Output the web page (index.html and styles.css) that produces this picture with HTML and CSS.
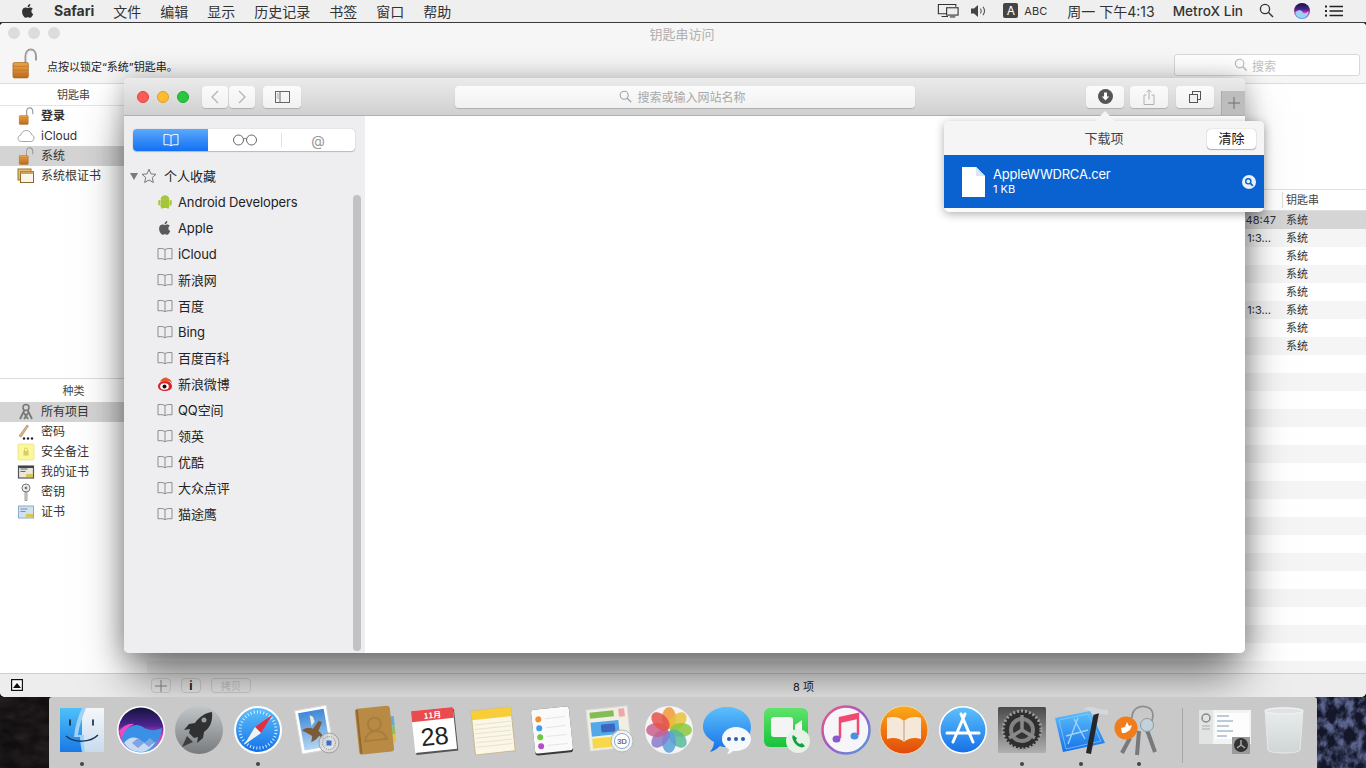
FILE: index.html
```html
<!DOCTYPE html>
<html lang="zh-CN">
<head>
<meta charset="utf-8">
<title>Safari</title>
<link rel="stylesheet" href="styles.css">
</head>
<body>
<svg class="defs" aria-hidden="true">
  <defs>
    <filter id="wallDark" x="0" y="0" width="100%" height="100%" color-interpolation-filters="sRGB"><feTurbulence type="fractalNoise" baseFrequency=".05 .09" numOctaves="3" seed="4"/><feColorMatrix values="0 0 0 0 .17  0 0 0 0 .14  0 0 0 0 .14  1.4 0 0 0 -.35"/></filter>
    <filter id="wallBlue" x="0" y="0" width="100%" height="100%" color-interpolation-filters="sRGB"><feTurbulence type="fractalNoise" baseFrequency=".11 .09" numOctaves="4" seed="9"/><feColorMatrix values="0 0 0 0 .36  0 0 0 0 .4  0 0 0 0 .56  3 0 0 0 -1.15"/></filter>
    <linearGradient id="lockBody" x1="0" y1="0" x2="0" y2="1"><stop offset="0" stop-color="#e9a24c"/><stop offset=".5" stop-color="#d98a2e"/><stop offset="1" stop-color="#b96a1c"/></linearGradient>
    <linearGradient id="blueG" x1="0" y1="0" x2="0" y2="1"><stop offset="0" stop-color="#5cc0fb"/><stop offset="1" stop-color="#1670e8"/></linearGradient>
    <linearGradient id="skyG" x1="0" y1="0" x2="0" y2="1"><stop offset="0" stop-color="#3f88d8"/><stop offset="1" stop-color="#b4d6f2"/></linearGradient>
    <linearGradient id="finderL" x1="0" y1="0" x2="0" y2="1"><stop offset="0" stop-color="#4fc1f9"/><stop offset="1" stop-color="#1a78e6"/></linearGradient>
    <linearGradient id="finderR" x1="0" y1="0" x2="0" y2="1"><stop offset="0" stop-color="#f4f7fa"/><stop offset="1" stop-color="#c9dbee"/></linearGradient>
    <linearGradient id="siriG" x1="0" y1="0" x2="0" y2="1"><stop offset="0" stop-color="#14143a"/><stop offset=".4" stop-color="#4a2490"/><stop offset=".62" stop-color="#d63fb0"/><stop offset="1" stop-color="#4fa8e8"/></linearGradient>
    <linearGradient id="grayG" x1="0" y1="0" x2="0" y2="1"><stop offset="0" stop-color="#c3c6c8"/><stop offset="1" stop-color="#777b7e"/></linearGradient>
    <linearGradient id="gearG" x1="0" y1="0" x2="0" y2="1"><stop offset="0" stop-color="#4a4a4a"/><stop offset="1" stop-color="#b0b0b0"/></linearGradient>
    <linearGradient id="ftG" x1="0" y1="0" x2="0" y2="1"><stop offset="0" stop-color="#5fe36a"/><stop offset="1" stop-color="#18c23c"/></linearGradient>
    <linearGradient id="ringG" x1="0" y1="0" x2="1" y2="1"><stop offset="0" stop-color="#f0567c"/><stop offset=".5" stop-color="#a05ac8"/><stop offset="1" stop-color="#4aa0e8"/></linearGradient>
    <linearGradient id="booksG" x1="0" y1="0" x2="0" y2="1"><stop offset="0" stop-color="#fbab18"/><stop offset="1" stop-color="#e2470b"/></linearGradient>
    <linearGradient id="trashG" x1="0" y1="0" x2="0" y2="1"><stop offset="0" stop-color="#e9eded"/><stop offset="1" stop-color="#d0d6d6"/></linearGradient>
    <symbol id="book" viewBox="0 0 16 14"><path d="M8 2.6C6.6 1.5 4 1.3 1 1.6v10.2c3-.3 5.6-.1 7 1 1.4-1.1 4-1.3 7-1V1.6c-3-.3-5.6-.1-7 1zM8 2.6v10.2" fill="none" stroke="#8d8d8f" stroke-width="1"/></symbol>
    <symbol id="apple" viewBox="0 0 24 24"><path d="M17.05 12.54c-.03-2.6 2.13-3.85 2.22-3.91-1.21-1.77-3.09-2.01-3.76-2.04-1.6-.16-3.12.94-3.93.94-.81 0-2.06-.92-3.39-.89-1.74.03-3.35 1.01-4.25 2.57-1.81 3.14-.46 7.8 1.3 10.35.86 1.25 1.89 2.65 3.24 2.6 1.3-.05 1.79-.84 3.36-.84 1.57 0 2.01.84 3.39.81 1.4-.02 2.28-1.27 3.14-2.53.99-1.45 1.4-2.85 1.42-2.92-.03-.01-2.72-1.04-2.75-4.14zM14.47 4.9c.72-.87 1.2-2.08 1.07-3.28-1.03.04-2.28.69-3.02 1.55-.66.77-1.24 2-1.09 3.18 1.15.09 2.33-.58 3.04-1.45z"/></symbol>
    <symbol id="lock" viewBox="0 0 26 32"><path d="M14 17V8.5C14 4 16.5 1.5 19.5 1.5S25 4 25 8.5V13" fill="none" stroke="#9a9a9c" stroke-width="2"/><path d="M15.5 16V8.5c0-3 1.5-5.5 4-5.5" fill="none" stroke="#e4e4e6" stroke-width="1"/><rect x="1" y="15" width="16" height="16" rx="1.5" fill="url(#lockBody)" stroke="#a8641d" stroke-width=".7"/><path d="M1 19h16M1 23h16M1 27h16" stroke="#b8742a" stroke-width=".7"/></symbol>
  </defs>
</svg>

<svg class="wallpaper" viewBox="0 0 1366 71" aria-hidden="true">
  <rect width="1366" height="71" fill="#100e0f"/>
  <rect width="60" height="71" filter="url(#wallDark)"/>
  <rect x="1310" width="56" height="71" fill="#14172a"/>
  <rect x="1310" width="56" height="71" filter="url(#wallBlue)"/>
</svg>

<header class="menubar">
  <div class="menu-left">
    <svg class="ic-apple"><use href="#apple"/></svg>
    <span class="menu-app">Safari</span>
    <span>文件</span><span>编辑</span><span>显示</span><span>历史记录</span><span>书签</span><span>窗口</span><span>帮助</span>
  </div>
  <div class="menu-right">
    <svg class="ic-display" viewBox="0 0 24 16"><path d="M12 11.5H1.5V1.5h19V4M5 14.5h7" fill="none" stroke="#333" stroke-width="1.2"/><rect x="10.5" y="5" width="12.5" height="8" fill="#eee" stroke="#333" stroke-width="1.2"/><path d="M14 15h6" stroke="#333" stroke-width="1.2"/></svg>
    <svg class="ic-speaker" viewBox="0 0 17 14"><path d="M1 4.5h3L8 1v12L4 9.5H1z" fill="#444"/><path d="M10.5 4.5c1 1.5 1 3.5 0 5M13 2.8c1.8 2.5 1.8 6 0 8.4" fill="none" stroke="#555" stroke-width="1.1"/></svg>
    <span class="input-badge">A</span>
    <span class="input-abc">ABC</span>
    <span class="menu-clock">周一 下午4:13</span>
    <span class="menu-user">MetroX Lin</span>
    <svg class="ic-search" viewBox="0 0 15 15"><circle cx="6" cy="6" r="4.6" fill="none" stroke="#333" stroke-width="1.3"/><path d="M9.5 9.5l4.5 4.5" stroke="#333" stroke-width="1.5"/></svg>
    <svg class="ic-siri" viewBox="0 0 16 16"><circle cx="8" cy="8" r="8" fill="url(#siriG)"/><path d="M1.5 9c3-2.5 6-2 7 0s4 1.5 6-1c0 2-1 7-6.5 7S1.5 11 1.5 9z" fill="#9ad2f4"/></svg>
    <svg class="ic-list" viewBox="0 0 18 12"><path d="M4.5 1.5H18M4.5 6H18M4.5 10.5H18" stroke="#222" stroke-width="1.5"/><path d="M0 1.5h2M0 6h2M0 10.5h2" stroke="#222" stroke-width="1.8"/></svg>
  </div>
</header>

<section class="keychain">
  <div class="kc-toolbar">
    <div class="kc-titlerow">
      <div class="kc-lights"><i></i><i></i><i></i></div>
      <span class="kc-title">钥匙串访问</span>
    </div>
    <div class="kc-toolrow">
      <svg class="kc-lock"><use href="#lock"/></svg>
      <span class="kc-locktext">点按以锁定“系统”钥匙串。</span>
      <div class="kc-search">
        <svg class="kc-search-ic" viewBox="0 0 15 15"><circle cx="6" cy="6" r="4.6" fill="none" stroke="#b8b8b8" stroke-width="1.2"/><path d="M9.5 9.5l4 4" stroke="#b8b8b8" stroke-width="1.5"/></svg>
        <span>搜索</span>
      </div>
    </div>
  </div>
  <div class="kc-main">
    <aside class="kc-side">
      <div class="kc-group kc-group-top">
        <div class="kc-head">钥匙串</div>
        <div class="kc-row"><svg class="kc-ic"><use href="#lock"/></svg><b>登录</b></div>
        <div class="kc-row"><svg class="kc-ic" viewBox="0 0 18 14"><path d="M4.5 12.5C2.3 12.5 1 11 1 9.3c0-1.6 1.1-2.8 2.7-3C4.3 3.4 6.5 1.5 9.3 1.5c2.7 0 4.8 1.8 5.3 4.2 1.5.3 2.4 1.7 2.4 3.3 0 2-1.4 3.5-3.4 3.5z" fill="#fff" stroke="#a4a4a6"/></svg>iCloud</div>
        <div class="kc-row kc-row-sel"><svg class="kc-ic"><use href="#lock"/></svg>系统</div>
        <div class="kc-row"><svg class="kc-ic" viewBox="0 0 18 16"><rect x="1" y="1" width="13" height="11" fill="#e6c070" stroke="#9a7424"/><rect x="3.5" y="3.5" width="13" height="11" fill="#fbf6e8" stroke="#8a6a24"/><path d="M3.5 3.5h13V6h-13z" fill="#c9a45a"/></svg>系统根证书</div>
      </div>
      <div class="kc-group">
        <div class="kc-head kc-head-kinds">种类</div>
        <div class="kc-row kc-row-sel"><svg class="kc-ic" viewBox="0 0 18 18"><circle cx="9" cy="4.5" r="3" fill="none" stroke="#77777a" stroke-width="1.5"/><path d="M7.5 7L3 16M10.5 7L15 16M7 10l4 6M11 10l-4 6" stroke="#77777a" stroke-width="1.8" fill="none"/></svg>所有项目</div>
        <div class="kc-row"><svg class="kc-ic" viewBox="0 0 18 18"><path d="M2 13L10 2l1.5 1L4 14z" fill="#d9b98c" stroke="#a07a50" stroke-width=".6"/><circle cx="7" cy="15.5" r="1.2" fill="#222"/><circle cx="11" cy="15.5" r="1.2" fill="#222"/><circle cx="15" cy="15.5" r="1.2" fill="#222"/></svg>密码</div>
        <div class="kc-row"><svg class="kc-ic" viewBox="0 0 18 18"><rect x="1" y="1" width="16" height="16" rx="1" fill="#fbf79a" stroke="#e8e480" stroke-width=".8"/><rect x="6.5" y="8" width="5" height="4.5" fill="#d8cc6a"/><path d="M7.5 8V6.5a1.5 1.5 0 013 0V8" fill="none" stroke="#d8cc6a"/></svg>安全备注</div>
        <div class="kc-row"><svg class="kc-ic" viewBox="0 0 18 18"><rect x="1.5" y="3" width="15" height="12" fill="#e8e8e0" stroke="#555" stroke-width="1.2"/><path d="M3.5 6h7M3.5 8.5h5" stroke="#666"/><path d="M9 11h7v3H9z" fill="#d8c850"/><rect x="1.5" y="3" width="15" height="2" fill="#444"/></svg>我的证书</div>
        <div class="kc-row"><svg class="kc-ic" viewBox="0 0 18 18"><circle cx="9" cy="5" r="4" fill="#f0f0f0" stroke="#777"/><circle cx="9" cy="5" r="1.4" fill="#777"/><path d="M8 9h2v8.5H8z" fill="#e4e4e4" stroke="#777" stroke-width=".7"/></svg>密钥</div>
        <div class="kc-row"><svg class="kc-ic" viewBox="0 0 18 18"><rect x="1.5" y="3" width="15" height="12" fill="#cfe2f2" stroke="#8eabc8"/><path d="M3.5 6h7M3.5 8.5h5" stroke="#7a8ea4"/><path d="M9 11h7v3H9z" fill="#d8c850"/></svg>证书</div>
      </div>
    </aside>
    <div class="kc-content">
      <div class="kc-detail"></div>
      <div class="kc-thead"><span class="kc-th-time"></span><span class="kc-th-chain">钥匙串</span></div>
      <div class="kc-tbody">
        <div class="kc-tr kc-tr-sel"><span>48:47</span><span>系统</span></div>
        <div class="kc-tr"><span class="kc-trunc">1:3…</span><span>系统</span></div>
        <div class="kc-tr"><span></span><span>系统</span></div>
        <div class="kc-tr"><span></span><span>系统</span></div>
        <div class="kc-tr"><span></span><span>系统</span></div>
        <div class="kc-tr"><span class="kc-trunc">1:3…</span><span>系统</span></div>
        <div class="kc-tr"><span></span><span>系统</span></div>
        <div class="kc-tr"><span></span><span>系统</span></div>
      </div>
    </div>
  </div>
  <footer class="kc-status">
    <span class="kc-status-toggle"><svg viewBox="0 0 12 12"><rect x=".6" y=".6" width="10.8" height="10.8" fill="#fff" stroke="#111" stroke-width="1.2"/><path d="M2 9l4-5 4 5z" fill="#111"/></svg></span>
    <span class="kc-sbtn kc-sbtn-plus"><svg viewBox="0 0 12 12"><path d="M6 0v12M0 6h12" stroke="#8a8a8a"/></svg></span>
    <span class="kc-sbtn kc-sbtn-i">i</span>
    <span class="kc-sbtn kc-sbtn-copy">拷贝</span>
    <span class="kc-count">8 项</span>
  </footer>
</section>

<section class="safari">
  <div class="sf-bar">
    <div class="sf-lights"><i class="red"></i><i class="yellow"></i><i class="green"></i></div>
    <div class="sf-nav">
      <span class="sf-btn"><svg viewBox="0 0 8 14"><path d="M7 1L1 7l6 6" fill="none" stroke="#b4b4b4" stroke-width="1.3"/></svg></span>
      <span class="sf-btn"><svg viewBox="0 0 8 14"><path d="M1 1l6 6-6 6" fill="none" stroke="#b4b4b4" stroke-width="1.3"/></svg></span>
    </div>
    <span class="sf-btn sf-side"><svg viewBox="0 0 15 12"><rect x=".5" y=".5" width="14" height="11" fill="none" stroke="#666"/><path d="M5 .5v11" stroke="#666"/><path d="M1.8 3h2M1.8 5h2M1.8 7h2" stroke="#888" stroke-width=".8"/></svg></span>
    <div class="sf-url">
      <svg viewBox="0 0 13 13"><circle cx="5.2" cy="5.2" r="4" fill="none" stroke="#a4a4a4" stroke-width="1.1"/><path d="M8.2 8.2l4 4" stroke="#a4a4a4" stroke-width="1.3"/></svg>
      <span>搜索或输入网站名称</span>
    </div>
    <span class="sf-btn sf-dl"><svg viewBox="0 0 15 15"><circle cx="7.5" cy="7.5" r="7.5" fill="#555"/><path d="M6 3.5h3v4h2.2l-3.7 4-3.7-4H6z" fill="#fff"/></svg></span>
    <span class="sf-btn sf-share"><svg viewBox="0 0 12 16"><path d="M3.5 6H1v9.5h10V6H8.500" fill="none" stroke="#b0b0b0"/><path d="M6 10.5V1M3.5 3.3L6 .8l2.5 2.5" fill="none" stroke="#b0b0b0"/></svg></span>
    <span class="sf-btn sf-tabs"><svg viewBox="0 0 12 12"><rect x="3.5" y=".5" width="8" height="8" fill="none" stroke="#555"/><rect x=".5" y="3.5" width="8" height="8" fill="#f1f1f1" stroke="#555"/></svg></span>
    <span class="sf-plus"><svg viewBox="0 0 12 12"><path d="M6 0v12M0 6h12" stroke="#6f6f6f"/></svg></span>
  </div>
  <div class="sf-body">
    <aside class="sf-sidebar">
      <div class="seg">
        <span class="seg-item seg-on"><svg viewBox="0 0 16 14"><path d="M8 2.6C6.6 1.5 4 1.3 1 1.6v10.2c3-.3 5.6-.1 7 1 1.4-1.1 4-1.3 7-1V1.6c-3-.3-5.6-.1-7 1zM8 2.6v10.2" fill="none" stroke="#fff"/></svg></span>
        <span class="seg-item seg-mid"><svg viewBox="0 0 26 12"><circle cx="6.5" cy="6" r="5" fill="none" stroke="#666"/><circle cx="19.5" cy="6" r="5" fill="none" stroke="#666"/><path d="M11.5 5c1-.7 2-.7 3 0" fill="none" stroke="#666"/></svg></span>
        <span class="seg-item seg-at">@</span>
      </div>
      <div class="fav-head">
        <span class="fav-tri"></span>
        <svg class="fav-star" viewBox="0 0 16 16"><path d="M8 1.2l2 4.7 5 .4-3.800 3.300 1.200 4.900L8 12l-4.400 2.500 1.200-4.900L1 6.300l5-.4z" fill="none" stroke="#77777a"/></svg>
        <span>个人收藏</span>
      </div>
      <ul class="fav-list">
        <li><svg viewBox="0 0 16 16"><path d="M4 6h8v6.500a1 1 0 01-1 1H5a1 1 0 01-1-1zM4 5.300C4 3.200 5.800 1.800 8 1.800s4 1.400 4 3.500zM5 15v-2M11 15v-2" fill="#a4c639" stroke="#a4c639"/><rect x="1.3" y="6" width="1.8" height="5.5" rx=".9" fill="#a4c639"/><rect x="12.9" y="6" width="1.8" height="5.5" rx=".9" fill="#a4c639"/></svg>Android Developers</li>
        <li><svg fill="#5a5a5c"><use href="#apple"/></svg>Apple</li>
        <li><svg><use href="#book"/></svg>iCloud</li>
        <li><svg><use href="#book"/></svg>新浪网</li>
        <li><svg><use href="#book"/></svg>百度</li>
        <li><svg><use href="#book"/></svg>Bing</li>
        <li><svg><use href="#book"/></svg>百度百科</li>
        <li><svg viewBox="0 0 16 16"><path d="M1 10.5C1 6.5 5 5 8 5c3.500 0 7 1.700 7 5.500 0 3-3.500 4.500-7 4.500s-7-1.500-7-4.500z" fill="#d8232a"/><path d="M3 5.500C4 3 7 1.200 9.500 1.500 11 3 14.500 3 15 7l-2-1.500z" fill="#e8592a"/><ellipse cx="7.5" cy="10.5" rx="4.3" ry="3.3" fill="#fff"/><circle cx="7.5" cy="10.5" r="2" fill="#111"/></svg>新浪微博</li>
        <li><svg><use href="#book"/></svg>QQ空间</li>
        <li><svg><use href="#book"/></svg>领英</li>
        <li><svg><use href="#book"/></svg>优酷</li>
        <li><svg><use href="#book"/></svg>大众点评</li>
        <li><svg><use href="#book"/></svg>猫途鹰</li>
      </ul>
      <div class="sf-scroll"></div>
    </aside>
    <main class="sf-page"></main>
  </div>
</section>

<section class="popover">
  <span class="pop-arrow"></span>
  <div class="pop-head">
    <span class="pop-title">下载项</span>
    <span class="pop-clear">清除</span>
  </div>
  <div class="pop-item">
    <svg class="pop-file" viewBox="0 0 23 30"><path d="M0 0h14l9 9v21H0z" fill="#fff"/><path d="M14 0l9 9h-9z" fill="#dbe6f4"/></svg>
    <div class="pop-info">
      <span class="pop-name">AppleWWDRCA.cer</span>
      <span class="pop-size">1 KB</span>
    </div>
    <svg class="pop-reveal" viewBox="0 0 14 14"><circle cx="7" cy="7" r="7" fill="#e8f1fb"/><circle cx="6.3" cy="6.3" r="2.6" fill="none" stroke="#0a62d0" stroke-width="1.4"/><path d="M8.2 8.2l2.6 2.6" stroke="#0a62d0" stroke-width="1.7"/></svg>
  </div>
</section>

<nav class="dock">
  <div class="dock-cell">
    <svg viewBox="0 0 54 54"><rect x="5" y="5" width="22" height="44" fill="url(#finderL)"/><rect x="27" y="5" width="22" height="44" fill="url(#finderR)"/><path d="M31 5c-4 10-7 18-8 27h6c-.5 5 0 11 1 17h-3c-1-5-2-10-2-15h-6c1-11 4-20 8-29z" fill="#9fd2f5"/><path d="M15 17v5M38 17v5" stroke="#123" stroke-width="1.6" stroke-linecap="round"/><path d="M11 33c8 7 24 7 32-1" fill="none" stroke="#14375e" stroke-width="1.5"/></svg>
    <i class="dot"></i>
  </div>
  <div class="dock-cell">
    <svg viewBox="0 0 54 54"><circle cx="27" cy="27" r="24" fill="#fff"/><circle cx="27" cy="27" r="22.5" fill="url(#siriG)"/><path d="M7 33c8-12 16-13 22-9s12 4 19 1c-1 11-10 24-21 24C17 49 9 42 7 33z" fill="#3a90e4"/><path d="M10 40c5-6 11-7 16-3s11 7 16 1c-3 6-9 11-15 11-7 0-13-3-17-9z" fill="#c8daf4"/><path d="M18 40l6-5 6 5-6 5zM30 40l6-5 4 4-5 5z" fill="#7fa4e2"/><path d="M5 28c5-6 10-8 15-7-6 3-10 7-12 14z" fill="#e84cc0"/></svg>
    <i class="dot dot-off"></i>
  </div>
  <div class="dock-cell">
    <svg viewBox="0 0 54 54"><circle cx="27" cy="27" r="24" fill="url(#grayG)"/><path d="M40 9c-7 1-13 5-17 11l-6 1-5 6 6-1-1 4 5 5 4-1-1 6 6-5 1-6c6-4 9-11 8-20z" fill="#2f3133"/><circle cx="32" cy="17" r="2.5" fill="#9a9c9e"/><path d="M15 33l-5 11 11-5z" fill="#3c3e40"/></svg>
    <i class="dot dot-off"></i>
  </div>
  <div class="dock-cell">
    <svg viewBox="0 0 54 54"><circle cx="27" cy="27" r="24" fill="#fff"/><circle cx="27" cy="27" r="22" fill="url(#blueG)"/><circle cx="27" cy="27" r="18" fill="none" stroke="#d6ecfd" stroke-width="3" stroke-dasharray="1 2.2"/><path d="M41 12L24 24l6 6z" fill="#e82e36"/><path d="M13 42l11-18 6 6z" fill="#f2f2f2"/></svg>
    <i class="dot"></i>
  </div>
  <div class="dock-cell">
    <svg viewBox="0 0 54 54"><g transform="rotate(-10 22 26)"><rect x="8" y="5" width="32" height="44" fill="#fff" stroke="#d8d8d8"/><rect x="11" y="8" width="26" height="38" fill="url(#skyG)"/><path d="M12 26c4-3 8-2 11 0l7-7 3 2-5 8c3 3 5 8 4 10l-4-5-4 3-5 2 2-6c-3-3-6-5-9-7z" fill="#7d5a38"/><path d="M22 12l3 2 1 5-4 4z" fill="#f0ead8"/></g><circle cx="39" cy="40" r="10" fill="#dcdcdc" fill-opacity=".8" stroke="#a0a0a0"/><circle cx="39" cy="40" r="6.5" fill="none" stroke="#8a8a8a" stroke-dasharray="1 1"/><rect x="36.5" y="37.5" width="5" height="5" fill="#3a6cc8"/></svg>
    <i class="dot dot-off"></i>
  </div>
  <div class="dock-cell">
    <svg viewBox="0 0 54 54"><g transform="rotate(-6 27 27)"><rect x="41" y="15" width="5" height="9" fill="#6aa8dc"/><rect x="41" y="24" width="5" height="9" fill="#8cc070"/><rect x="41" y="33" width="5" height="8" fill="#e4c24a"/><rect x="8" y="4" width="35" height="46" rx="3" fill="#b88a44"/><rect x="9" y="5" width="2" height="44" fill="#94682c"/><circle cx="26" cy="21" r="6.5" fill="none" stroke="#a87e3c" stroke-width="2"/><path d="M15 37c2-7 6-9 11-9s9 2 11 9z" fill="none" stroke="#a87e3c" stroke-width="2"/></g></svg>
    <i class="dot dot-off"></i>
  </div>
  <div class="dock-cell">
    <svg viewBox="0 0 54 54"><g transform="rotate(-6 27 27)"><rect x="7" y="8" width="42" height="42" fill="#555"/><rect x="6" y="6" width="42" height="42" fill="#fff"/><rect x="6" y="6" width="42" height="11" fill="#ea4b4f"/><text class="cal-month" x="27" y="15" text-anchor="middle">11月</text><text class="cal-day" x="27" y="42" text-anchor="middle">28</text></g></svg>
    <i class="dot dot-off"></i>
  </div>
  <div class="dock-cell">
    <svg viewBox="0 0 54 54"><g transform="rotate(-6 27 27)"><rect x="7" y="6" width="40" height="44" fill="#fbf7e4" stroke="#c8b890"/><rect x="7" y="6" width="40" height="9" fill="#f8cd3a"/><path d="M9 20h36M9 24.500h36M9 29h36M9 33.500h36M9 38h36M9 42.500h36" stroke="#e4e2d8"/></g></svg>
    <i class="dot dot-off"></i>
  </div>
  <div class="dock-cell">
    <svg viewBox="0 0 54 54"><g transform="rotate(-6 27 27)"><rect x="8" y="5" width="38" height="46" rx="3" fill="#3a3a3c"/><rect x="8" y="5" width="38" height="44" rx="3" fill="#fafafa"/><circle cx="14.5" cy="15" r="3" fill="#f09030"/><circle cx="14.5" cy="24" r="3" fill="#3aa0e8"/><circle cx="14.5" cy="33" r="3" fill="#70c840"/><circle cx="14.5" cy="42" r="3" fill="#b050c8"/><path d="M21 15h20M21 24h20M21 33h20M21 42h20" stroke="#e4e4e4"/></g></svg>
    <i class="dot dot-off"></i>
  </div>
  <div class="dock-cell">
    <svg viewBox="0 0 54 54"><g transform="rotate(-6 24 24)"><rect x="4" y="5" width="41" height="41" fill="#f2eee2" stroke="#ddd"/><rect x="7" y="8" width="24" height="6" fill="#84bc58"/><path d="M7 18h28v14H7z" fill="#54a8e8"/><path d="M7 34h20v10H7z" fill="#f6d84a"/><rect x="17" y="21" width="14" height="8" rx="1.5" fill="#3a66c0"/><rect x="36" y="7" width="6" height="8" fill="#eca8a8"/></g><circle cx="38" cy="38" r="11" fill="#f2f2f2" stroke="#b8b8b8"/><circle cx="38" cy="38" r="7.5" fill="#fff" stroke="#8aaad0"/><text class="maps-3d" x="38" y="41" text-anchor="middle">3D</text></svg>
    <i class="dot dot-off"></i>
  </div>
  <div class="dock-cell">
    <svg viewBox="0 0 54 54"><circle cx="27" cy="27" r="24" fill="#f4f4f4"/><g fill-opacity=".85"><ellipse cx="27" cy="15" rx="7" ry="11" fill="#f09a3a"/><ellipse cx="27" cy="15" rx="7" ry="11" fill="#e8c23a" transform="rotate(45 27 27)"/><ellipse cx="27" cy="15" rx="7" ry="11" fill="#8cc83c" transform="rotate(90 27 27)"/><ellipse cx="27" cy="15" rx="7" ry="11" fill="#58b89a" transform="rotate(135 27 27)"/><ellipse cx="27" cy="15" rx="7" ry="11" fill="#5aa0dc" transform="rotate(180 27 27)"/><ellipse cx="27" cy="15" rx="7" ry="11" fill="#8a7ac8" transform="rotate(225 27 27)"/><ellipse cx="27" cy="15" rx="7" ry="11" fill="#c8608c" transform="rotate(270 27 27)"/><ellipse cx="27" cy="15" rx="7" ry="11" fill="#e4524a" transform="rotate(315 27 27)"/></g></svg>
    <i class="dot dot-off"></i>
  </div>
  <div class="dock-cell">
    <svg viewBox="0 0 54 54"><path d="M26 4c13 0 24 8 24 20 0 11-10 20-24 20-3 0-5 0-7-1-3 3-6 5-10 6 2-3 4-6 4-10C6 35 2 30 2 24 2 12 13 4 26 4z" fill="url(#blueG)"/><path d="M35 24c8 0 15 5 15 12s-7 12-15 12h-3c-2 2-4 3-6 3 1-1 2-3 2-5-4-2-7-6-7-10 0-7 6-12 14-12z" fill="#f6f9fc"/><circle cx="28" cy="36" r="2" fill="#2a5cb0"/><circle cx="35" cy="36" r="2" fill="#2a5cb0"/><circle cx="42" cy="36" r="2" fill="#2a5cb0"/></svg>
    <i class="dot dot-off"></i>
  </div>
  <div class="dock-cell">
    <svg viewBox="0 0 54 54"><rect x="4" y="5" width="44" height="39" rx="6" fill="url(#ftG)"/><rect x="11" y="14" width="22" height="20" rx="3" fill="#f4f4f4"/><path d="M35 22l7-5v15l-7-5z" fill="#f4f4f4"/><circle cx="38" cy="38" r="12" fill="#e6f2e6"/><path d="M33 32c-1 1-1 3 0 5 1 3 4 6 7 7 2 1 4 0 5-1l-3-3-2 1c-2-1-3-2-4-4l1-2z" fill="#15a043"/></svg>
    <i class="dot dot-off"></i>
  </div>
  <div class="dock-cell">
    <svg viewBox="0 0 54 54"><circle cx="27" cy="27" r="23.5" fill="#f6f6f8" stroke="url(#ringG)" stroke-width="2.5"/><path d="M21 35V15l18-4v21" fill="none" stroke="#ef4a72" stroke-width="2.5"/><path d="M21 15l18-4v5l-18 4z" fill="#ef4a72"/><ellipse cx="17.5" cy="36" rx="4" ry="3.5" fill="#8a58d0"/><ellipse cx="35.5" cy="33" rx="4" ry="3.5" fill="#4a90e0"/></svg>
    <i class="dot dot-off"></i>
  </div>
  <div class="dock-cell">
    <svg viewBox="0 0 54 54"><circle cx="27" cy="27" r="24" fill="url(#booksG)"/><circle cx="27" cy="27" r="24" fill="none" stroke="#f4d8b0"/><path d="M27 18c-4-4-11-5-17-3v21c6-2 13-1 17 3 4-4 11-5 17-3V15c-6-2-13-1-17 3z" fill="#f6e8d8"/><path d="M27 18v21" stroke="#c89878"/></svg>
    <i class="dot dot-off"></i>
  </div>
  <div class="dock-cell">
    <svg viewBox="0 0 54 54"><circle cx="27" cy="27" r="24" fill="#fff"/><circle cx="27" cy="27" r="22.5" fill="url(#blueG)"/><path d="M29 11L17 39M25 11l12 28M11 30h32" stroke="#fff" stroke-width="3" fill="none" stroke-linecap="round"/></svg>
    <i class="dot dot-off"></i>
  </div>
  <div class="dock-cell">
    <svg viewBox="0 0 54 54"><rect x="3" y="4" width="48" height="46" rx="1.5" fill="url(#gearG)"/><circle cx="27" cy="27" r="19" fill="#2e2e2e"/><circle cx="27" cy="27" r="19" fill="none" stroke="#9c9c9c" stroke-width="3" stroke-dasharray="2 2"/><circle cx="27" cy="27" r="13" fill="#828282"/><circle cx="27" cy="27" r="9" fill="#333"/><path d="M27 27V12M27 27L14 35M27 27l13 8" stroke="#8a8a8a" stroke-width="3.5"/></svg>
    <i class="dot"></i>
  </div>
  <div class="dock-cell">
    <svg viewBox="0 0 54 54"><path d="M1 15L36 8l15 32L9 49z" fill="url(#blueG)"/><path d="M5 17l29-6 13 27-35 8z" fill="none" stroke="#94ccfa" stroke-width=".7"/><path d="M14 41L24 15M31 36L20 16M12 33l22-6" stroke="#9ed2fb" stroke-width="1.4" fill="none"/><path d="M40 9l5 1-8 41-5-1z" fill="#24282c"/><path d="M29 6c5-3 11-2 15 0l10 1 0 4-3 1c-4-2-8-2-11 0l-3-3c-2-2-5-3-8-3z" fill="#d4d8dc"/></svg>
    <i class="dot"></i>
  </div>
  <div class="dock-cell">
    <svg viewBox="0 0 54 54"><path d="M18 35L10 50M27 28L25 52M35 27L43 49" stroke="#77797c" stroke-width="4" fill="none"/><circle cx="35" cy="22" r="6.5" fill="#c2d2dc" stroke="#8a9aa4"/><path d="M20 15C20 5 28 2 35 4C41 6 42 12 40 18" fill="none" stroke="#8c8e90" stroke-width="1.8"/><circle cx="14" cy="25" r="11.5" fill="#f07c1c"/><path d="M15 19l2 4 3-1-2 5-5 3h-3l-1-5 4-1z" fill="#fff"/></svg>
    <i class="dot"></i>
  </div>
  <div class="dock-divider"></div>
  <div class="dock-cell">
    <svg viewBox="0 0 54 54"><rect x="1" y="7" width="52" height="34" fill="#f2f4f2"/><rect x="1" y="7" width="14" height="34" fill="#e2e4e4"/><circle cx="8" cy="15" r="4" fill="none" stroke="#888" stroke-width="1.5"/><path d="M4 23h8M4 26h8" stroke="#aaa"/><rect x="17" y="10" width="34" height="26" fill="#fdfdfd"/><path d="M19 13h12M19 18h16M19 23h12M19 28h16M19 33h10" stroke="#7a96b8"/><rect x="34" y="34" width="18" height="17" fill="#9a9a9a"/><circle cx="43" cy="42" r="7" fill="#333"/><path d="M43 42v-5M43 42l-4 3M43 42l4 3" stroke="#aaa" stroke-width="1.5"/></svg>
  </div>
  <div class="dock-cell">
    <svg viewBox="0 0 54 54"><path d="M8 7c6-3 32-3 38 0l-3 40c-1 4-31 4-32 0z" fill="url(#trashG)" stroke="#e8eaea"/><ellipse cx="27" cy="8" rx="18.5" ry="3" fill="#dfe3e3" stroke="#f2f4f4"/></svg>
  </div>
</nav>
</body>
</html>
```

FILE: styles.css
```css
* { box-sizing: border-box; }
html, body { margin: 0; padding: 0; }
body {
  position: relative;
  width: 1366px;
  height: 768px;
  overflow: hidden;
  font-family: Inter, "Noto Sans CJK SC", sans-serif;
  font-size: 13px;
  color: #222;
  background: #121011;
}
.defs { position: absolute; width: 0; height: 0; }
.wallpaper { position: absolute; left: 0; top: 697px; width: 1366px; height: 71px; }

/* Menu bar */
.menubar {
  position: relative;
  height: 23px;
  display: flex;
  justify-content: space-between;
  align-items: center;
  padding-bottom: 1px;
  background: #efefef;
  border-bottom: 1px solid #3a3a3a;
  font-size: 14px;
  color: #333;
}
.menu-left { display: flex; align-items: center; gap: 19px; padding-left: 20px; }
.ic-apple { width: 16px; height: 16px; fill: #333; margin-right: -1px; }
.menu-app { font-weight: 700; }
.menu-right { display: flex; align-items: center; padding-right: 23px; }
.ic-display { width: 22px; height: 15px; }
.ic-speaker { width: 17px; height: 14px; margin-left: 11px; }
.input-badge {
  width: 15px; height: 15px; margin-left: 16px;
  background: #444; color: #fff; border-radius: 2px;
  font-size: 12px; line-height: 15px; text-align: center;
}
.input-abc { margin-left: 6px; font-size: 11px; width: 23px; }
.menu-clock { margin-left: 20px; }
.menu-user { margin-left: 18px; font-weight: 500; font-size: 13.6px; }
.ic-search { width: 15px; height: 15px; margin-left: 16px; }
.ic-siri { width: 16px; height: 16px; margin-left: 20px; }
.ic-list { width: 18px; height: 12px; margin-left: 15px; }

/* Keychain window */
.keychain {
  position: absolute;
  left: 0; top: 23px;
  width: 1366px; height: 674px;
  display: flex;
  flex-direction: column;
  background: #fff;
  border-radius: 4px 4px 5px 5px;
  overflow: hidden;
}
.kc-toolbar {
  height: 61px;
  flex: none;
  background: #f6f6f6;
  border-bottom: 1px solid #dcdcdc;
}
.kc-titlerow { height: 21px; display: flex; align-items: center; position: relative; justify-content: center; }
.kc-lights { position: absolute; left: 8px; top: 4px; display: flex; gap: 8px; }
.kc-lights i { width: 12px; height: 12px; border-radius: 50%; background: #dcdcdc; }
.kc-title { font-size: 13px; color: #b0b0b0; margin-left: -2px; }
.kc-toolrow { display: flex; align-items: center; padding: 4px 6px 0 12px; }
.kc-lock { width: 25px; height: 31px; }
.kc-locktext { font-size: 11px; color: #222; margin-left: 10px; margin-top: 5px; }
.kc-search {
  margin-left: auto;
  margin-top: 3px;
  width: 186px; height: 22px;
  background: #fff;
  border: 1px solid #d8d8d8;
  border-radius: 3px;
  display: flex; align-items: center; justify-content: center; gap: 4px;
  padding-right: 24px;
  color: #c0c0c0; font-size: 12px;
}
.kc-search-ic { width: 14px; height: 14px; }
.kc-main { flex: 1; display: flex; min-height: 0; }
.kc-side { width: 147px; flex: none; display: flex; flex-direction: column; font-size: 12px; }
.kc-group { flex: 1; }
.kc-group-top { flex: none; height: 295px; border-bottom: 1px solid #dcdcdc; }
.kc-head {
  height: 22px;
  display: flex; align-items: center; justify-content: center;
  font-size: 11px; color: #444;
}
.kc-group-top .kc-head { border-bottom: 1px solid #e4e4e4; padding-bottom: 1px; }
.kc-head-kinds { height: 23px; padding-bottom: 1px; }
.kc-row { height: 20px; display: flex; align-items: center; padding-left: 17px; gap: 6px; color: #333; line-height: 14px; }
.kc-row b { font-weight: 600; }
.kc-row-sel { background: #d4d4d4; }
.kc-ic { width: 18px; height: 18px; flex: none; }
.kc-content { flex: 1; display: flex; flex-direction: column; min-width: 0; }
.kc-detail { height: 106px; flex: none; border-bottom: 1px solid #e0e0e0; }
.kc-thead {
  height: 21px; flex: none;
  display: grid; grid-template-columns: 1fr 84px;
  align-items: center;
  border-bottom: 1px solid #e0e0e0;
  font-size: 11px; color: #444;
}
.kc-th-chain { border-left: 1px solid #ddd; padding-left: 3px; height: 16px; line-height: 16px; }
.kc-tbody {
  flex: 1;
  background: repeating-linear-gradient(#fff 0, #fff 18px, #f5f5f5 18px, #f5f5f5 36px);
}
.kc-tr {
  height: 18px;
  display: grid; grid-template-columns: 1fr 80px;
  align-items: center;
  font-size: 11px; color: #333;
  line-height: 14px;
}
.kc-tr span:first-child { text-align: right; padding-right: 10px; }
.kc-tr .kc-trunc:first-child { padding-right: 15px; }
.kc-tr-sel { background: #d5d5d5; }
.kc-status {
  height: 24px; flex: none;
  display: flex; align-items: center;
  background: #ededed;
  border-top: 1px solid #d0d0d0;
  font-size: 11px; color: #222;
}
.kc-status-toggle { margin-left: 11px; width: 14px; height: 14px; }
.kc-status-toggle svg { display: block; width: 12px; height: 12px; }
.kc-sbtn {
  height: 15px;
  border: 1px solid #d2d2d2; border-radius: 4px;
  display: flex; align-items: center; justify-content: center;
  color: #c8c8c8;
}
.kc-sbtn-plus { width: 20px; margin-left: 126px; }
.kc-sbtn-plus svg { width: 12px; height: 12px; }
.kc-sbtn-i { width: 20px; margin-left: 10px; color: #222; font-weight: 700; font-size: 12px; }
.kc-sbtn-copy { width: 40px; margin-left: 10px; font-size: 10px; }
.kc-count { margin-left: 542px; color: #222; }

/* Safari window */
.safari {
  position: absolute;
  left: 124px; top: 78px;
  width: 1121px; height: 575px;
  display: flex; flex-direction: column;
  background: #fff;
  border-radius: 5px;
  overflow: hidden;
  box-shadow: 0 0 26px rgba(0,0,0,.28), 0 30px 44px -6px rgba(0,0,0,.5);
}
.sf-bar {
  height: 38px; flex: none;
  display: flex; align-items: center;
  padding-left: 13px;
  background: linear-gradient(#ebebeb, #d0d0d0);
  border-bottom: 1px solid #b0b0b0;
}
.sf-lights { display: flex; gap: 8px; }
.sf-lights i { width: 12px; height: 12px; border-radius: 50%; }
.sf-lights .red { background: #fc5b57; border: 1px solid #e0443e; }
.sf-lights .yellow { background: #fdbc2e; border: 1px solid #dfa023; }
.sf-lights .green { background: #28c73f; border: 1px solid #1aab29; }
.sf-nav { display: flex; gap: 1px; margin-left: 13px; }
.sf-nav .sf-btn { width: 26px; }
.sf-btn {
  height: 22px; width: 38px;
  display: flex; align-items: center; justify-content: center;
  background: linear-gradient(#fbfbfb, #f1f1f1);
  border-radius: 4px;
  box-shadow: 0 1px 1px rgba(0,0,0,.18);
}
.sf-nav svg { width: 8px; height: 14px; }
.sf-side { margin-left: 8px; }
.sf-side svg { width: 15px; height: 12px; }
.sf-url {
  margin-left: 154px;
  width: 460px; height: 22px;
  display: flex; align-items: center; justify-content: center; gap: 5px;
  background: linear-gradient(#fbfbfb, #f1f1f1);
  border-radius: 4px;
  box-shadow: 0 1px 1px rgba(0,0,0,.18);
  font-size: 12px; color: #a8a8a8;
  padding-right: 5px;
}
.sf-url svg { width: 13px; height: 13px; }
.sf-dl { margin-left: 171px; }
.sf-dl svg { width: 15px; height: 15px; }
.sf-share { margin-left: 6px; }
.sf-share svg { width: 12px; height: 16px; }
.sf-tabs { margin-left: 8px; }
.sf-tabs svg { width: 12px; height: 12px; }
.sf-plus {
  margin-left: 7px;
  width: 24px; height: 24px;
  align-self: flex-end;
  display: flex; align-items: center; justify-content: center;
  background: #bdbdbd;
  border-left: 1px solid #aaa;
}
.sf-plus svg { width: 12px; height: 12px; }
.sf-body { flex: 1; display: flex; min-height: 0; }
.sf-sidebar {
  position: relative;
  width: 241px; flex: none;
  background: #eeeef0;
  padding: 13px 0 0 9px;
}
.sf-page { flex: 1; background: #fff; }
.seg {
  width: 222px; height: 22px;
  display: grid; grid-template-columns: 75px 73px 1fr;
  background: #fff;
  border-radius: 4px;
  box-shadow: 0 0 1px rgba(0,0,0,.3), 0 1px 1px rgba(0,0,0,.2);
  overflow: hidden;
}
.seg-item { display: flex; align-items: center; justify-content: center; }
.seg-on { background: linear-gradient(#5aa9fb, #1270f4); }
.seg-on svg { width: 16px; height: 14px; }
.seg-mid svg { width: 26px; height: 12px; }
.seg-at { color: #999; font-size: 14px; position: relative; }
.seg-at::before { content: ""; position: absolute; left: 0; top: 4px; bottom: 4px; width: 1px; background: #e2e2e2; }
.fav-head {
  height: 26px; margin-top: 12px;
  display: flex; align-items: center;
  margin-left: -3px;
  color: #222;
  line-height: 16px;
}
.fav-tri { width: 0; height: 0; border-left: 4px solid transparent; border-right: 4px solid transparent; border-top: 7px solid #7a7a7a; }
.fav-star { width: 16px; height: 16px; margin-left: 3px; margin-right: 7px; }
.fav-list { list-style: none; margin: 0; padding: 0; }
.fav-list li {
  height: 26px;
  display: flex; align-items: center; gap: 5px;
  padding-left: 24px;
  color: #222;
  line-height: 16px;
  letter-spacing: -.1px;
}
.fav-list svg { width: 16px; height: 16px; flex: none; }
.sf-scroll {
  position: absolute;
  left: 229px; top: 79px;
  width: 8px; height: 456px;
  background: #c2c2c4;
  border-radius: 4px;
}

/* Downloads popover */
.popover {
  position: absolute;
  left: 944px; top: 121px;
  width: 320px; height: 91px;
  background: #fafafa;
  border-radius: 5px;
  box-shadow: 0 2px 10px rgba(0,0,0,.32);
}
.pop-arrow {
  position: absolute;
  left: 151px; top: -10px;
  width: 20px; height: 20px;
  background: #f5f5f5;
  transform: rotate(45deg) scale(.7);
}
.pop-head {
  position: relative;
  height: 34px;
  display: flex; align-items: center; justify-content: center;
  background: #f5f5f5;
  border-radius: 5px 5px 0 0;
}
.pop-title { font-size: 13px; color: #444; line-height: 16px; }
.pop-clear {
  position: absolute;
  left: 263px; top: 8px;
  width: 49px; height: 20px;
  display: flex; align-items: center; justify-content: center;
  background: #fff;
  border-radius: 4px;
  box-shadow: 0 0 1px rgba(0,0,0,.4), 0 1px 1px rgba(0,0,0,.25);
  color: #111;
  line-height: 16px;
  padding-bottom: 2px;
}
.pop-item {
  height: 53px;
  display: flex; align-items: center;
  padding-left: 18px; padding-right: 8px;
  background: #0a62d0;
  color: #fff;
}
.pop-file { width: 23px; height: 30px; flex: none; }
.pop-info { display: flex; flex-direction: column; margin-left: 8px; margin-top: -1px; flex: 1; }
.pop-name { font-size: 13px; line-height: 16px; letter-spacing: -.2px; }
.pop-size { font-size: 11px; line-height: 14px; }
.pop-reveal { width: 14px; height: 14px; }

/* Dock */
.dock {
  position: absolute;
  left: 49px; top: 697px;
  width: 1268px; height: 71px;
  display: flex;
  padding-left: 3.6px;
  background: #c9c9c9;
  border-radius: 3px 3px 0 0;
}
.dock-cell {
  width: 58.75px; flex: none;
  display: flex; flex-direction: column; align-items: center;
  padding-top: 6px;
}
.dock-cell svg { width: 54px; height: 54px; flex: none; }
.dot { width: 4px; height: 4px; margin-top: 5px; background: #444; border-radius: 50%; }
.dot-off { visibility: hidden; }
.dock-divider { width: 1px; height: 55px; margin: 11px 13px 0 13px; background: #a6a6a6; flex: none; }
.cal-month { font: 700 8px "Noto Sans CJK SC", sans-serif; fill: #fff; }
.cal-day { font: 400 25px "Liberation Sans", sans-serif; fill: #222; }
.maps-3d { font: 700 8px "Liberation Sans", sans-serif; fill: #777; }
```
